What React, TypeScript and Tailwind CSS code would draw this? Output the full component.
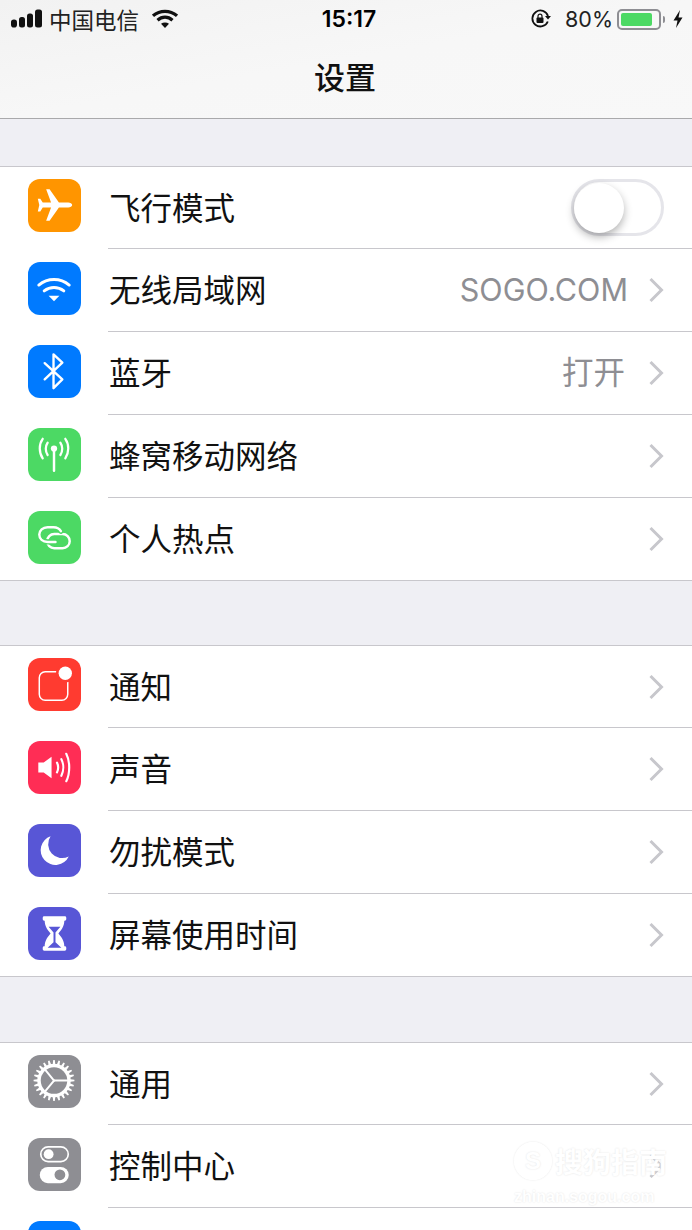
import React from 'react';

const cjk = "font-['Noto_Sans_CJK_SC','Noto_Sans',sans-serif]";

function gearPath() {
  const teeth = 24;
  const cx = 26.5;
  const cy = 26;
  let d = '';
  for (let i = 0; i < teeth; i++) {
    const step = (Math.PI * 2) / teeth;
    const a = i * step;
    const pts = [
      [17, a - step * 0.3],
      [20.8, a - step * 0.14],
      [20.8, a + step * 0.14],
      [17, a + step * 0.3],
    ];
    pts.forEach(([r, t], j) => {
      const x = (cx + r * Math.cos(t)).toFixed(2);
      const y = (cy + r * Math.sin(t)).toFixed(2);
      d += `${i === 0 && j === 0 ? 'M' : 'L'}${x} ${y} `;
    });
  }
  return d + 'Z';
}

function Plane() {
  return (
    <path
      fill="#fff"
      d="M45 26.500c0 1.500-2 2.500-4 2.500h-9.500L22 42.500h-3.500L23.500 29H15l-2.500 4H10l1.500-6.500L10 20h2.500l2.500 4h8.500L18.500 10.500H22L31.500 24H41c2 0 4 1 4 2.500Z"
    />
  );
}

function Wifi() {
  return (
    <g fill="none" stroke="#fff" strokeWidth="3" strokeLinecap="round">
      <path d="M11 23.500c9-7.500 22-7.500 31 0" />
      <path d="M16.500 29.500c6-4.700 14-4.700 20 0" />
      <path d="M21 34.500h11l-5.500 5.500Z" fill="#fff" stroke="none" />
    </g>
  );
}

function Bluetooth() {
  return (
    <path
      fill="none"
      stroke="#fff"
      strokeWidth="2.400"
      strokeLinejoin="round"
      strokeLinecap="round"
      d="M17 18.500 35 35l-9 9V9.500l9 8.500-18 17"
    />
  );
}

function Cellular() {
  return (
    <g fill="none" stroke="#fff" strokeWidth="2.300" strokeLinecap="round">
      <circle cx="26.500" cy="21" r="3.200" fill="#fff" stroke="none" />
      <path d="M26.500 22v21.500" strokeWidth="2.500" />
      <path d="M20 15c-2.500 3.500-2.500 9 0 12.500" />
      <path d="M33 15c2.500 3.500 2.500 9 0 12.500" />
      <path d="M15 11c-4 5.500-4 14 0 20" />
      <path d="M38 11c4 5.500 4 14 0 20" />
    </g>
  );
}

function Hotspot() {
  const first = 'M33.500 20.500c-1.500-2.500-4-4-7.500-4h-6c-5 0-8.500 3.500-8.500 7.500 0 4.500 3.500 7.500 8.500 7.500h8';
  return (
    <g fill="none" strokeLinecap="round">
      <rect x="19.500" y="23.500" width="23" height="14.500" rx="7.250" stroke="#fff" strokeWidth="2.500" />
      <path d={first} stroke="#4cd964" strokeWidth="5.500" />
      <path d={first} stroke="#fff" strokeWidth="2.500" />
    </g>
  );
}

function Notification() {
  return (
    <g>
      <rect x="11.500" y="14" width="29" height="29" rx="6" fill="none" stroke="#fff" strokeWidth="1.500" />
      <circle cx="38" cy="15.500" r="9.500" fill="#ff3b30" />
      <circle cx="38" cy="15.500" r="6.800" fill="#fff" />
    </g>
  );
}

function Sound() {
  return (
    <g>
      <path fill="#fff" d="M10.500 22H16l8-6v22l-8-6h-5.500Z" />
      <g fill="none" stroke="#fff" strokeWidth="2.200" strokeLinecap="round">
        <path d="M29.500 22c1.500 3 1.500 7 0 10" />
        <path d="M34 18.500c2.500 5 2.500 12 0 17" />
        <path d="M39 13c4 8 4 20 0 28" />
      </g>
    </g>
  );
}

function Moon() {
  return <path fill="#fff" d="M23 12.500A15 15 0 1 0 41.500 33 14.200 14.200 0 0 1 23 12.500Z" />;
}

function Hourglass() {
  return (
    <g>
      <path
        fill="#fff"
        d="M16.500 9.500h21a1.500 1.500 0 0 1 1.500 1.500v1.500a1.500 1.500 0 0 1-1.500 1.500H37c0 6-3.500 10-6 13 2.500 3 6 7 6 13h.5a1.500 1.500 0 0 1 1.500 1.500V43a1.500 1.500 0 0 1-1.500 1.500h-21A1.500 1.500 0 0 1 15 43v-1.500a1.500 1.500 0 0 1 1.500-1.500h.5c0-6 3.500-10 6-13-2.500-3-6-7-6-13h-.5A1.500 1.500 0 0 1 15 12.500V11a1.500 1.500 0 0 1 1.500-1.500Z"
      />
      <path fill="#5856d6" d="M21 20h12l-5 6v10l6 5.500H20l6-5.500V26Z" />
    </g>
  );
}

function Gear() {
  return (
    <g>
      <path fill="#fff" d={gearPath()} />
      <circle cx="26.500" cy="26" r="13.500" fill="#8e8e93" />
      <g stroke="#fff" strokeWidth="2" strokeLinecap="round">
        <path d="M26.500 26H40" />
        <path d="M26.500 26 17 14.500" />
        <path d="M26.500 26 17 37.500" />
      </g>
    </g>
  );
}

function Controls() {
  return (
    <g>
      <rect x="13" y="9" width="28" height="15" rx="7.500" fill="none" stroke="#fff" strokeWidth="1.700" />
      <circle cx="21" cy="16.500" r="5" fill="#fff" />
      <rect x="12" y="29.500" width="29.500" height="16.500" rx="8.250" fill="#fff" />
      <circle cx="32.500" cy="37.500" r="5.500" fill="#8e8e93" />
    </g>
  );
}

function Tile({ bg, children }: { bg: string; children?: React.ReactNode }) {
  return (
    <div className={`w-[53px] h-[53px] rounded-[12px] shrink-0 ${bg}`}>
      <svg viewBox="0 0 54 54" className="w-[53px] h-[53px]">
        {children}
      </svg>
    </div>
  );
}

function Chevron() {
  return (
    <svg width="16" height="26" viewBox="0 0 16 26" className="shrink-0">
      <path d="M2.500 2 13.500 13 2.500 24" fill="none" stroke="#c7c7cc" strokeWidth="3" />
    </svg>
  );
}

function Toggle() {
  return (
    <div className="w-[93px] h-[57px] rounded-full border-[3px] border-[#e5e5ea] bg-white flex items-center">
      <div className="w-[50px] h-[50px] rounded-full bg-white shadow-[0_4px_8px_rgba(0,0,0,0.3)]" />
    </div>
  );
}

type Item = {
  label: string;
  bg: string;
  icon?: React.ReactNode;
  value?: string;
  valueClass?: string;
  toggle?: boolean;
};

function Row({ item }: { item: Item }) {
  return (
    <div className="group flex h-[83px] first:h-[82px] last:h-[82px] bg-white">
      <div className="ml-[28px] mt-[13px] group-first:mt-[12px] self-start">
        <Tile bg={item.bg}>{item.icon}</Tile>
      </div>
      <div className="ml-[27px] flex-1 flex items-center border-b border-[#c8c7cc] group-last:border-b-0 pr-[28px] pl-[1px]">
        <span className={`${cjk} text-[31.5px] leading-[40px] text-[#111] flex-1 pb-[4px]`}>{item.label}</span>
        {item.toggle ? (
          <Toggle />
        ) : (
          <>
            {item.value && (
              <span className={`font-['Inter','Noto_Sans_CJK_SC',sans-serif] leading-[40px] text-[#8e8e93] ${item.valueClass}`}>
                {item.value}
              </span>
            )}
            <Chevron />
          </>
        )}
      </div>
    </div>
  );
}

function Section({ items }: { items: Item[] }) {
  return (
    <div className="border-y border-[#c8c7cc]">
      {items.map((item, i) => (
        <Row key={i} item={item} />
      ))}
    </div>
  );
}

const network: Item[] = [
  { label: '飞行模式', bg: 'bg-[#ff9500]', icon: <Plane />, toggle: true },
  {
    label: '无线局域网',
    bg: 'bg-[#007aff]',
    icon: <Wifi />,
    value: 'SOGO.COM',
    valueClass: 'text-[30.5px] mr-[20px]',
  },
  { label: '蓝牙', bg: 'bg-[#007aff]', icon: <Bluetooth />, value: '打开', valueClass: 'text-[31.5px] mr-[23px]' },
  { label: '蜂窝移动网络', bg: 'bg-[#4cd964]', icon: <Cellular /> },
  { label: '个人热点', bg: 'bg-[#4cd964]', icon: <Hotspot /> },
];

const alerts: Item[] = [
  { label: '通知', bg: 'bg-[#ff3b30]', icon: <Notification /> },
  { label: '声音', bg: 'bg-[#ff2d55]', icon: <Sound /> },
  { label: '勿扰模式', bg: 'bg-[#5856d6]', icon: <Moon /> },
  { label: '屏幕使用时间', bg: 'bg-[#5856d6]', icon: <Hourglass /> },
];

const general: Item[] = [
  { label: '通用', bg: 'bg-[#8e8e93]', icon: <Gear /> },
  { label: '控制中心', bg: 'bg-[#8e8e93]', icon: <Controls /> },
  { label: '', bg: 'bg-[#007aff]' },
];

function StatusBar() {
  return (
    <div className="h-[38px] grid grid-cols-[1fr_auto_1fr] items-center text-black">
      <div className="flex items-center pl-[11px]">
        <svg width="31" height="20" viewBox="0 0 31 20">
          <rect x="0" y="10.500" width="6" height="8" rx="2.800" fill="#111" />
          <rect x="8" y="8" width="6" height="10.500" rx="2.500" fill="#111" />
          <rect x="16" y="4.500" width="6" height="14" rx="2.500" fill="#111" />
          <rect x="24" y="0.500" width="7" height="18" rx="2.500" fill="#111" />
        </svg>
        <span className={`${cjk} text-[22.5px] leading-[30px] ml-[7px] text-[#222]`}>中国电信</span>
        <svg width="26" height="20" viewBox="0 0 26 20" className="ml-[13px]">
          <path d="M1 6.800c7-6 17-6 24 0" fill="none" stroke="#111" strokeWidth="3.200" />
          <path d="M5.500 11.200c4.500-4 10.500-4 15 0" fill="none" stroke="#111" strokeWidth="3.200" />
          <path d="M9 14.800c2.500-1.700 5.500-1.700 8 0L13 19Z" fill="#111" />
        </svg>
      </div>
      <span className="font-['Inter',sans-serif] font-semibold text-[23px] leading-[30px] ml-[6px]">15:17</span>
      <div className="flex items-center justify-end pr-[8px]">
        <svg width="22" height="20" viewBox="0 0 22 20">
          <path d="M17.800 12.500A8 8 0 1 1 18 7" fill="none" stroke="#111" strokeWidth="1.800" />
          <path d="M15 7h6l-3 3.500Z" fill="#111" />
          <rect x="6.500" y="8.500" width="7" height="5.500" rx="1" fill="#111" />
          <path d="M8 9V7.200a2 2 0 0 1 4 0V9" fill="none" stroke="#111" strokeWidth="1.200" />
        </svg>
        <span className="font-['Inter',sans-serif] text-[21.5px] leading-[30px] ml-[13px] text-[#222]">80%</span>
        <div className="ml-[4px] w-[44px] h-[21px] rounded-[5px] border-2 border-[#8e8e93] p-[2px]">
          <div className="w-[31px] h-full rounded-[2px] bg-[#4cd964]" />
        </div>
        <div className="ml-[2px] w-[2px] h-[7px] rounded-r-[2px] bg-[#8e8e93]" />
        <svg width="12" height="20" viewBox="0 0 12 20" className="ml-[7px]">
          <path d="M8 1 1.500 11.500h4L4 19l6.500-10.500h-4Z" fill="#111" />
        </svg>
      </div>
    </div>
  );
}

export default function App() {
  return (
    <div className="relative w-[692px] h-[1230px] overflow-hidden bg-[#efeff4]">
      <div className="h-[119px] bg-gradient-to-br from-[#f2f2f2] via-[#f7f7f7] to-[#f8f8f8] border-b border-[#a9a9ab]">
        <StatusBar />
        <h1 className={`${cjk} text-center font-medium text-[31px] leading-[40px] text-[#111] mt-[18px] -ml-[2px]`}>设置</h1>
      </div>
      <div className="mt-[47px]">
        <Section items={network} />
      </div>
      <div className="mt-[64px]">
        <Section items={alerts} />
      </div>
      <div className="mt-[65px]">
        <Section items={general} />
      </div>

      {/* watermark */}
      <div className="absolute left-[514px] top-[1142px] w-[160px] text-white [text-shadow:0_0_2px_#e2e2e2]">
        <div className="flex items-center">
          <div className="w-[38px] h-[38px] rounded-full border-[3px] border-white shadow-[0_0_2px_#e2e2e2] flex items-center justify-center font-['Liberation_Sans',sans-serif] font-bold text-[24px] leading-none">
            S
          </div>
          <span className={`${cjk} font-bold text-[28px] leading-[38px] ml-[3px] whitespace-nowrap`}>搜狗指南</span>
        </div>
        <div className="font-['Liberation_Sans',sans-serif] font-bold text-[16px] leading-[18px] mt-[8px] whitespace-nowrap">
          zhinan.sogou.com
        </div>
      </div>
    </div>
  );
}
